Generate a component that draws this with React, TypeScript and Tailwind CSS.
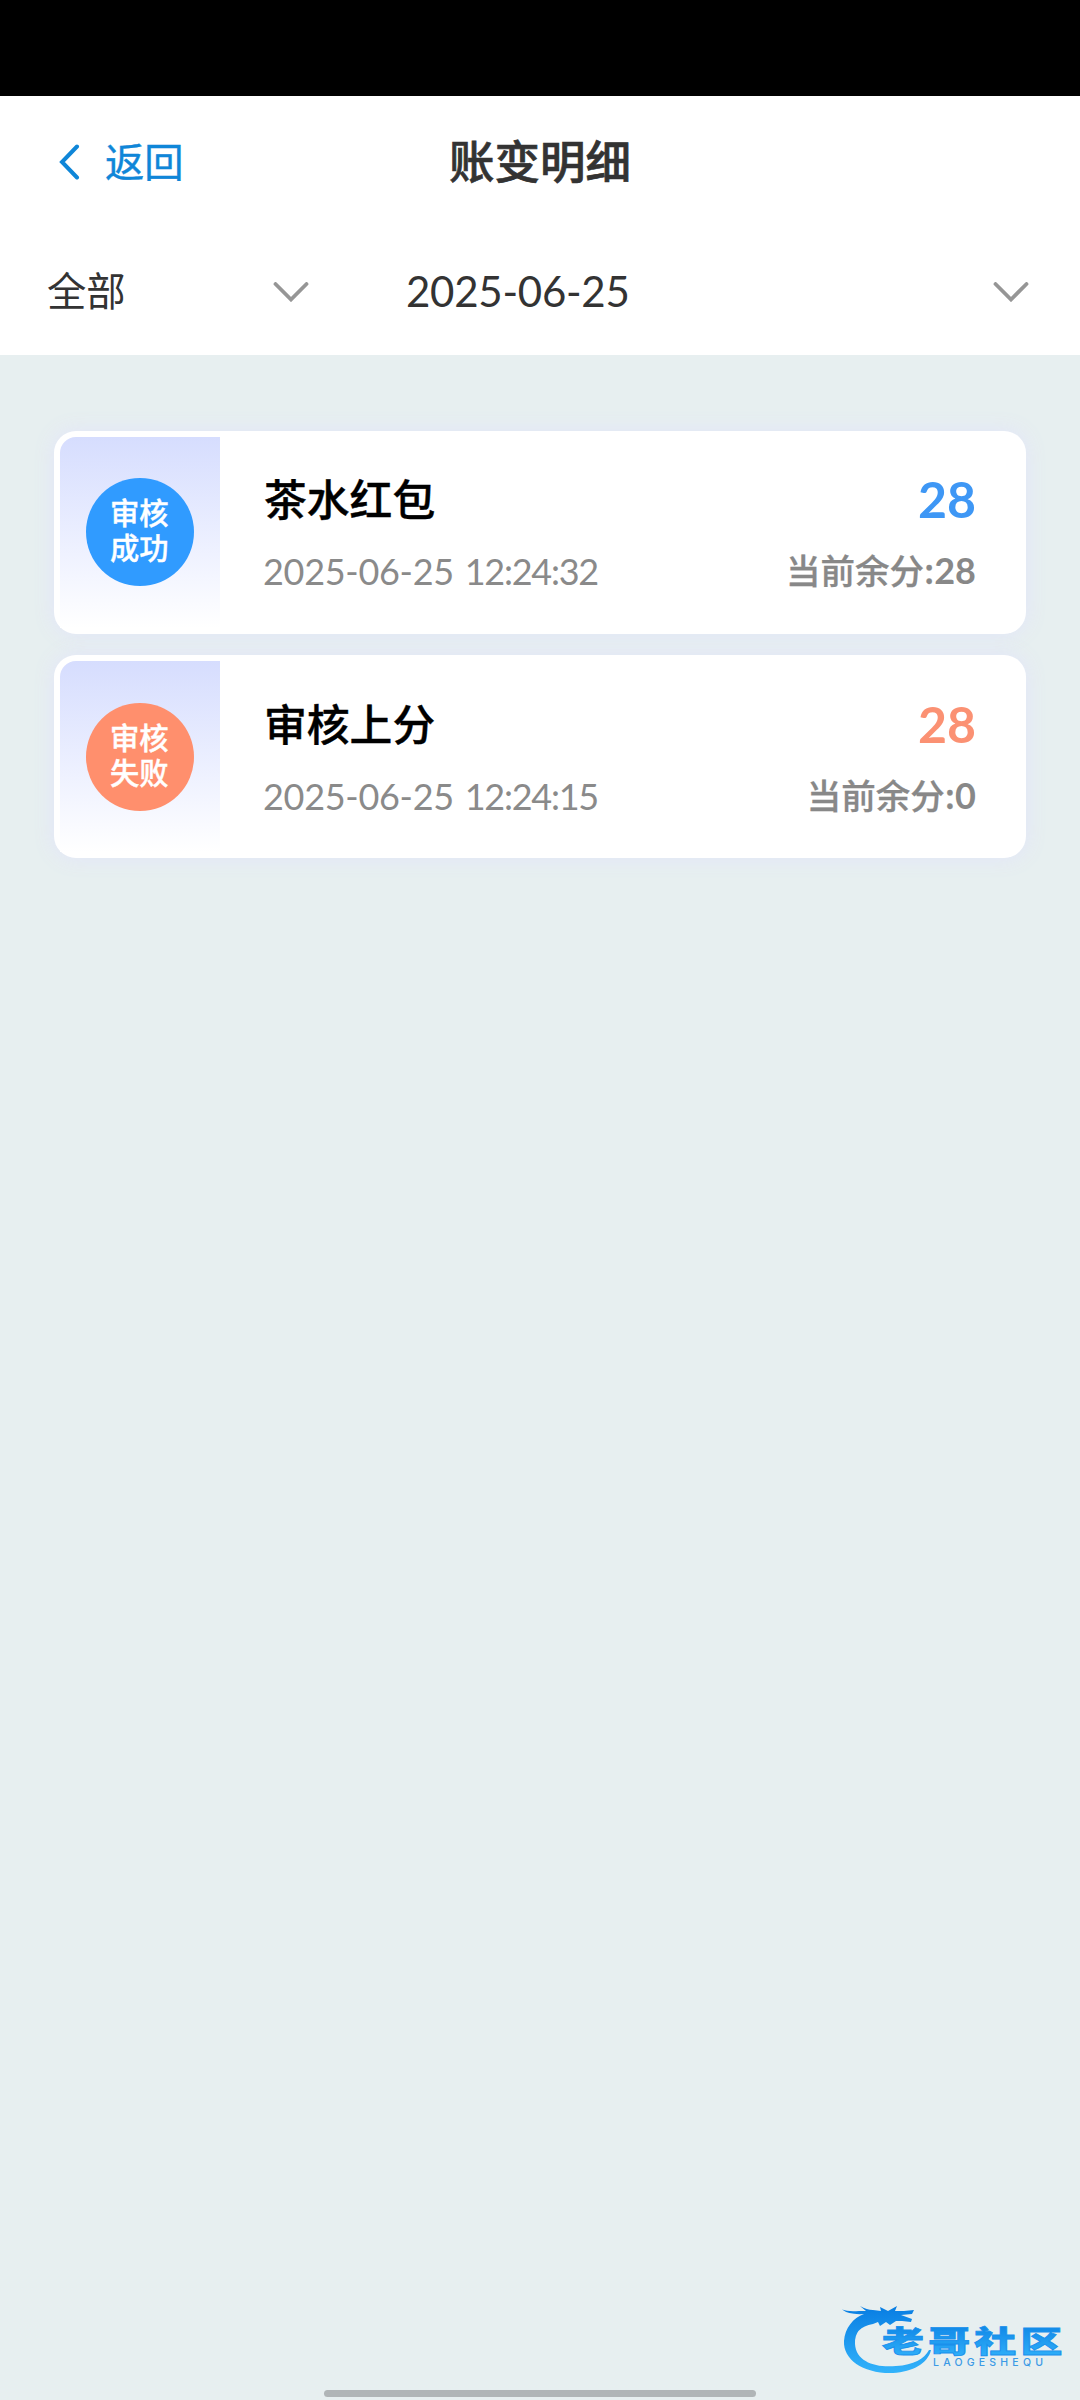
import React from "react";

type Entry = {
  title: string;
  date: string;
  time: string;
  amount: string;
  balance: string;
  badge: string;
  badgeColor: string;
  amountColor: string;
};

const entries: Entry[] = [
  {
    title: "茶水红包",
    date: "2025-06-25",
    time: "12:24:32",
    amount: "28",
    balance: "28",
    badge: "审核成功",
    badgeColor: "bg-[#309bff]",
    amountColor: "text-[#3e97f5]",
  },
  {
    title: "审核上分",
    date: "2025-06-25",
    time: "12:24:15",
    amount: "28",
    balance: "0",
    badge: "审核失败",
    badgeColor: "bg-[#ff8f6d]",
    amountColor: "text-[#fb9173]",
  },
];

function ChevronDown() {
  return (
    <svg className="h-5 w-9 shrink-0" viewBox="0 0 36 20" fill="none" stroke="#969696" strokeWidth="3.8" strokeLinecap="round">
      <path d="M2.5 2 18 17.500 33.500 2" />
    </svg>
  );
}

function Card({ e }: { e: Entry }) {
  return (
    <li className="group flex h-[203px] rounded-[22px] bg-white p-1.5 shadow-[0_0_18px_2px_rgba(226,230,248,0.9)]">
      <div className="flex w-40 shrink-0 justify-center rounded-tl-[16px] bg-linear-to-b from-[#d6ddfe] to-white pt-[41px] group-last:pt-[42px]">
        <div className={"flex size-[108px] justify-center rounded-full pt-[16px] text-[29.3px] font-medium leading-[35px] text-white [-webkit-text-stroke:0.4px] " + e.badgeColor}>
          <span className="w-[60px]">{e.badge}</span>
        </div>
      </div>
      <div className="flex flex-1 justify-between pl-[43px] pr-11 group-last:pt-px">
        <div className="flex flex-col pt-[33px]">
          <h2 className="pl-px text-[42.8px] font-medium leading-[54px] text-black [-webkit-text-stroke:0.4px]">{e.title}</h2>
          <time className="mt-[29px] whitespace-nowrap font-[Lato] text-[36px] leading-[36px] tracking-[-0.3px] text-[#8a8a8a]">
            {e.date} <span className="ml-[2px] tracking-[-1.25px]">{e.time}</span>
          </time>
        </div>
        <div className="flex flex-col items-end pt-[35px]">
          <span className={"font-[Lato] text-[50px] font-bold leading-[54px] " + e.amountColor}>{e.amount}</span>
          <span className="mt-[18px] text-[34.5px] font-medium leading-[50px] text-[#888888] [-webkit-text-stroke:0.3px]">
            当前余分:<span className="font-[Lato] text-[36px] font-bold leading-[36px] [-webkit-text-stroke:0]">{e.balance}</span>
          </span>
        </div>
      </div>
    </li>
  );
}

function Logo() {
  return (
    <svg className="absolute bottom-0 right-0 h-[120px] w-[260px]" viewBox="0 0 260 120">
      <defs>
        <linearGradient id="ink" x1="0" y1="0" x2="0" y2="1">
          <stop offset="0" stopColor="#087de2" />
          <stop offset="1" stopColor="#32b3fb" />
        </linearGradient>
      </defs>
      <path
        fill="url(#ink)"
        d="M22 29.500Q28 32 39 31L46 31 40 26Q47 30 53 30L61 31 60 27 68 31 77 26 75 31 84 31 94 30 92 34 81 35 92 39 91 42 82 41 76 41 70 45 66 42 60 46 58 42 53 44Q34 47 35 64C36 82 56 88 76 86C94 85 104 79 109 70L111 70C108 83 93 92 73 93C44 94 23 80 24 61C25 48 33 38 44 34Q29 35 22 29.500Z"
      />
      <text
        transform="translate(62 71.500) scale(1.42 1)"
        fill="url(#ink)"
        stroke="#1a90ec"
        strokeWidth="0.8"
        fontSize="29.5"
        fontWeight="900"
        textLength="127"
      >
        老哥社区
      </text>
      <text x="113" y="86" fill="#3b9ae6" className="font-[Inter] font-medium" fontSize="10.5" textLength="110">
        LAOGESHEQU
      </text>
    </svg>
  );
}

export default function App() {
  return (
    <div className="relative flex h-[2400px] w-[1080px] flex-col bg-[#e7eff0] font-['Noto_Sans_CJK_SC',sans-serif]">
      <div className="h-24 bg-black" />
      <header className="grid h-[132px] grid-cols-[1fr_auto_1fr] items-center bg-white">
        <button className="flex items-center gap-[25px] pl-[59px] text-left text-[39.300px] leading-[60px] text-[#0f86d8]">
          <svg className="h-9 w-[21px]" viewBox="0 0 21 36" fill="none" stroke="currentColor" strokeWidth="4" strokeLinecap="round">
            <path d="M18 2.500 3 18 18 33.500" />
          </svg>
          <span className="pb-[4px] [-webkit-text-stroke:0.4px]">返回</span>
        </button>
        <h1 className="pb-[7px] text-[45.500px] font-medium leading-[64px] text-[#333333] [-webkit-text-stroke:0.7px]">账变明细</h1>
      </header>
      <div className="flex h-[127px] items-center bg-white text-[39.300px] text-[#333333]">
        <div className="flex w-[309px] items-center justify-between pl-[47px]">
          <span className="pb-[4px]">全部</span>
          <ChevronDown />
        </div>
        <div className="flex flex-1 items-center justify-between pl-[97px] pr-[51px]">
          <span className="pb-px font-[Lato] text-[42px] tracking-[-0.25px]">2025-06-25</span>
          <ChevronDown />
        </div>
      </div>
      <ul className="flex flex-col gap-[21px] px-[54px] pt-[76px]">
        {entries.map((e) => (
          <Card key={e.title} e={e} />
        ))}
      </ul>
      <Logo />
      <div className="absolute bottom-[3px] left-[324px] h-[7px] w-[432px] rounded-full bg-[#b0b5b7]" />
    </div>
  );
}
